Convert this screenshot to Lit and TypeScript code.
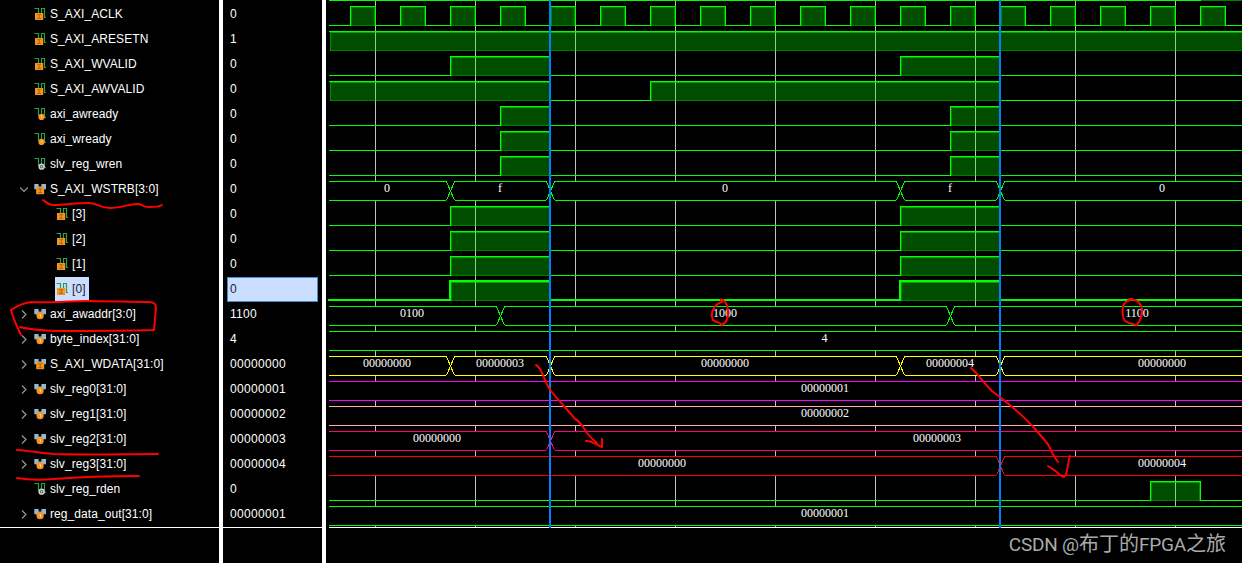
import { LitElement, html, svg, css } from "lit";
import { customElement } from "lit/decorators.js";
import { classMap } from "lit/directives/class-map.js";

type Icon = "port" | "reg" | "wire" | "busPort" | "busReg";
interface Signal {
  name: string;
  value: string;
  icon: Icon;
  toggle?: "open" | "closed";
  child?: boolean;
  selected?: boolean;
  high?: [number, number][];
  color?: string;
  cuts?: number[];
  labels?: [number, string][];
}

const LEFT = 329;
const RIGHT = 1242;
const GREEN = "#00ff00";
const clock: [number, number][] = Array.from({ length: 18 }, (_, i) => [350 + i * 50, 375 + i * 50]);
const strobe: [number, number][] = [[450, 550], [900, 1000]];
const ready: [number, number][] = [[500, 550], [950, 1000]];

const SIGNALS: Signal[] = [
  { name: "S_AXI_ACLK", value: "0", icon: "port", high: clock },
  { name: "S_AXI_ARESETN", value: "1", icon: "port", high: [[LEFT, RIGHT + 2]] },
  { name: "S_AXI_WVALID", value: "0", icon: "port", high: strobe },
  { name: "S_AXI_AWVALID", value: "0", icon: "port", high: [[LEFT, 550], [650, 1000]] },
  { name: "axi_awready", value: "0", icon: "reg", high: ready },
  { name: "axi_wready", value: "0", icon: "reg", high: ready },
  { name: "slv_reg_wren", value: "0", icon: "wire", high: ready },
  { name: "S_AXI_WSTRB[3:0]", value: "0", icon: "busPort", toggle: "open", color: GREEN, cuts: [450, 550, 900, 1000], labels: [[387, "0"], [500, "f"], [725, "0"], [950, "f"], [1162, "0"]] },
  { name: "[3]", value: "0", icon: "port", child: true, high: strobe },
  { name: "[2]", value: "0", icon: "port", child: true, high: strobe },
  { name: "[1]", value: "0", icon: "port", child: true, high: strobe },
  { name: "[0]", value: "0", icon: "port", child: true, selected: true, high: strobe },
  { name: "axi_awaddr[3:0]", value: "1100", icon: "busReg", toggle: "closed", color: GREEN, cuts: [500, 950], labels: [[412, "0100"], [725, "1000"], [1137, "1100"]] },
  { name: "byte_index[31:0]", value: "4", icon: "busReg", toggle: "closed", color: GREEN, labels: [[824.5, "4"]] },
  { name: "S_AXI_WDATA[31:0]", value: "00000000", icon: "busPort", toggle: "closed", color: "#ffff00", cuts: [450, 550, 900, 1000], labels: [[387, "00000000"], [500, "00000003"], [725, "00000000"], [950, "00000004"], [1162, "00000000"]] },
  { name: "slv_reg0[31:0]", value: "00000001", icon: "busReg", toggle: "closed", color: "#ff00ff", labels: [[825, "00000001"]] },
  { name: "slv_reg1[31:0]", value: "00000002", icon: "busReg", toggle: "closed", color: "#ffafaf", labels: [[825, "00000002"]] },
  { name: "slv_reg2[31:0]", value: "00000003", icon: "busReg", toggle: "closed", color: "#ff007f", cuts: [550], labels: [[437, "00000000"], [937, "00000003"]] },
  { name: "slv_reg3[31:0]", value: "00000004", icon: "busReg", toggle: "closed", color: "#ff0000", cuts: [1000], labels: [[662, "00000000"], [1162, "00000004"]] },
  { name: "slv_reg_rden", value: "0", icon: "wire", high: [[1150, 1200]] },
  { name: "reg_data_out[31:0]", value: "00000001", icon: "busReg", toggle: "closed", color: GREEN, labels: [[825, "00000001"]] },
];

const trace = svg`<path d="M.5 .5H4.5V8M7.5 10V.5H10.5V9.5H12" fill="none" stroke="#2f9e49" stroke-width="1.2"/>`;
const blocks = svg`<path d="M.3 1H4.6V3.4H7.4V1H12V6.2H9.5L8 8.5H3.5L2.5 6.2H.3Z" fill="#93b9cf"/>`;
const glyphs: Record<Icon, unknown> = {
  port: svg`${trace}<rect x="1" y="5" width="8.2" height="7" fill="#f7941e"/><path d="M3.2 6.7H7.2M5.2 6.7V10.4M3.2 10.4H7.2" stroke="#a0641c" stroke-width=".9" fill="none"/>`,
  reg: svg`${trace}<circle cx="7.5" cy="8.9" r="3.1" fill="#f7941e"/><path d="M6.8 7.8h1v2.4" stroke="#ffd9a0" fill="none" stroke-width=".8"/>`,
  wire: svg`${trace}<circle cx="7.6" cy="8.7" r="2.4" fill="#555" stroke="#d0d0d0" stroke-width="1.5"/><circle cx="7.6" cy="8.7" r=".8" fill="#eee"/>`,
  busPort: svg`${blocks}<rect x="2.2" y="4" width="8" height="7.2" fill="#f7941e"/><path d="M4.2 5.9H8.2M6.2 5.9V9.6M4.2 9.6H8.2" stroke="#a0641c" stroke-width=".9" fill="none"/>`,
  busReg: svg`${blocks}<circle cx="6.1" cy="7.7" r="3.6" fill="#f7941e"/><path d="M5.4 6.3h1.1v2.8" stroke="#ffe2b8" fill="none" stroke-width=".9"/>`,
};

@customElement("signal-icon")
class SignalIcon extends LitElement {
  static properties = { kind: {} };
  declare kind: Icon;
  static styles = css`
    :host { display: block; width: 13px; height: 13px; }
    svg { display: block; }
  `;
  render() {
    return html`<svg width="13" height="13" viewBox="0 0 13 13">${glyphs[this.kind]}</svg>`;
  }
}

@customElement("wave-view")
class WaveView extends LitElement {
  static styles = css`
    :host { display: block; }
    svg { display: block; }
    .label { font: 12px "Liberation Serif", serif; fill: #fff; text-anchor: middle; }
    .crisp { shape-rendering: crispEdges; }
  `;

  private bar(x: number, y: number, w: number, h: number, fill: string) {
    return svg`<rect x=${x} y=${y} width=${w} height=${h} fill=${fill}/>`;
  }

  private bit(s: Signal, i: number) {
    const top = 6 + 25 * i;
    const low = top + 19;
    const t = s.selected ? 2 : 1;
    const out: unknown[] = [];
    let at = s.selected ? LEFT - 1 : LEFT;
    for (const [a, b] of s.high!) {
      const fromEdge = a === LEFT;
      if (!fromEdge) {
        out.push(this.bar(at, low - t + 1, a - at, t, GREEN));
      }
      out.push(this.bar(a + 1, top + 1, b - a - 1, 19, "rgba(0,255,0,.3)"));
      out.push(this.bar(a + 1, low, b - a - 1, 1, "rgba(0,255,0,.28)"));
      out.push(this.bar(a + 1, top + 1, b - a - 1, 1, i === 0 ? "rgba(0,255,0,.3)" : "rgba(0,255,0,.5)"));
      out.push(this.bar(a + 1, top + 2, 1, 18, "rgba(0,255,0,.35)"));
      out.push(this.bar(a - t + 1, top - t + 1, b - a + t, t, GREEN));
      if (!fromEdge) out.push(this.bar(a - t + 1, top - t + 1, t, 19 + t, GREEN));
      out.push(this.bar(b - 1, top + 2, 1, 18, "rgba(0,255,0,.35)"));
      out.push(this.bar(b, top, 1, 20, GREEN));
      at = b;
    }
    if (at < RIGHT) out.push(this.bar(at, low - t + 1, RIGHT - at, t, GREEN));
    return out;
  }

  private bus(s: Signal, i: number) {
    const top = 6 + 25 * i;
    const cuts = s.cuts ?? [];
    const edges = [LEFT - 5, ...cuts, RIGHT + 5];
    const rails = edges.slice(1).map((b, k) => {
      const a = edges[k] + 5;
      return [this.bar(a, top, b - 4 - a, 1, s.color!), this.bar(a, top + 19, b - 4 - a, 1, s.color!)];
    });
    const crosses = cuts.map(
      (c) => svg`<path d="M${c - 3.5} ${top + 0.5}L${c + 4.5} ${top + 19.5}M${c + 4.5} ${top + 0.5}L${c - 3.5} ${top + 19.5}" stroke=${s.color!} fill="none"/>`
    );
    return svg`${this.bar(LEFT, top, RIGHT - LEFT, 20, "#000")}${rails}${crosses}`;
  }

  render() {
    return html`<svg width="916" height="563" viewBox="326 0 916 563">
      <g class="crisp">
        ${Array.from({ length: 9 }, (_, i) => this.bar(375 + i * 100, 0, 1, 527, "#c0c0c0"))}
        ${this.bar(LEFT, 0, 872, 1, GREEN)}${this.bar(1201, 0, 41, 1, "#008000")}
        ${SIGNALS.map((s, i) => (s.high ? this.bit(s, i) : this.bus(s, i)))}
        ${this.bar(LEFT, 527, 913, 1, "#fff")}
        ${this.bar(549, 0, 2, 528, "#0080ff")}${this.bar(999, 0, 2, 528, "#0080ff")}
      </g>
      ${SIGNALS.map((s, i) => (s.labels ?? []).map(([x, t]) => svg`<text class="label" x=${x} y=${17 + 25 * i}>${t}</text>`))}
    </svg>`;
  }
}

@customElement("app-root")
class AppRoot extends LitElement {
  static styles = css`
    :host {
      display: block; position: relative; width: 1242px; height: 563px; overflow: hidden;
      background: #000; color: #fff; font: 12px "Liberation Sans", Arial, sans-serif;
    }
    .columns { display: grid; grid-template-columns: 219px 99px 916px; column-gap: 4px; height: 563px; background: #fff; }
    .pane { background: #000; min-width: 0; }
    .list { display: grid; grid-auto-rows: 25px; padding-top: 2px; border-bottom: 1px solid #fff; }
    .row { display: flex; align-items: center; padding-left: 20px; }
    .child { padding-left: 42px; }
    .toggle { width: 8px; height: 25px; flex: none; margin-right: 5px; }
    .tag { display: flex; align-items: center; height: 25px; padding: 0 3px 0 1px; }
    .tag signal-icon { margin-right: 3px; }
    .tag.on { background: #ccdeff; color: #223; }
    .name { height: 25px; line-height: 24px; white-space: nowrap; letter-spacing: 0.08px; }
    .value { box-sizing: border-box; margin: 0 4px; padding-left: 3px; line-height: 24px; letter-spacing: 0.33px; }
    .value.on { background: #ccdeff; color: #223; border: 1px solid #3c8fd0; padding-left: 2px; line-height: 22px; }
    .ink { position: absolute; left: 0; top: 0; }
    .mark { position: absolute; right: 16px; top: 529px; font: 20px/27px "Noto Sans CJK SC", sans-serif; color: #aaa; white-space: nowrap; }
    .latin { font-family: Roboto, sans-serif; font-size: 19px; letter-spacing: -0.2px; }
  `;

  render() {
    return html`
      <div class="columns">
        <div class="pane">
          <div class="list">
            ${SIGNALS.map(
              (s) => html`<div class=${classMap({ row: true, child: !!s.child })}>
                <svg class="toggle" viewBox="0 0 8 25">
                  ${s.toggle
                    ? svg`<path d=${s.toggle === "open" ? "M0 10.5L4 14.5L8 10.5" : "M2 8.5L6 12.5L2 16.5"} fill="none" stroke="#999" stroke-width="1.2"/>`
                    : ""}
                </svg>
                <div class=${classMap({ tag: true, on: !!s.selected })}>
                  <signal-icon .kind=${s.icon}></signal-icon><span class="name">${s.name}</span>
                </div>
              </div>`
            )}
          </div>
        </div>
        <div class="pane">
          <div class="list">
            ${SIGNALS.map((s) => html`<div class=${classMap({ value: true, on: !!s.selected })}>${s.value}</div>`)}
          </div>
        </div>
        <wave-view class="pane"></wave-view>
      </div>
      <svg class="ink" width="1242" height="563" fill="none" stroke="#f00" stroke-width="2" stroke-linecap="round" stroke-linejoin="round">
        <path d="M43 200C46 202 49 205 53 205C64 205 76 203 88 203C98 203 99 208 110 208C122 208 128 204 138 204C143 204 141 207 149 207C155 207 159 207 162 205"/>
        <path d="M21 335C16 325 13 317 11 310C17 306 23 303 31 302C50 303 66 301 85 301C108 301 130 302 149 302C154 302 156 304 156 308L154 330C120 331 80 331 55 331C40 330 30 330 20 327"/>
        <path d="M17 450C31 451 40 453 53 454C90 455 122 454 158 454"/>
        <path d="M17 478C28 480 42 480 54 479C78 477 98 476 139 476"/>
        <path d="M536 365C540 367 541 371 543 375C546 382 548 388 551 391C559 401 567 409 575 419C580 421 583 427 587 433C591 438 593 440 597 443M586 441C592 440 597 446 602 447V439"/>
        <path d="M971 368C980 376 984 383 992 391C1008 403 1023 415 1036 430C1041 436 1048 443 1050 448C1052 454 1055 458 1058 462M1048 466C1054 470 1057 471 1060 475L1064 477C1068 474 1067 465 1070 456"/>
        <path d="M722 302C717 303 716 305 714 308C711 313 711 316 713 320C716 323 718 321 722 325C726 323 728 320 728 314C728 308 727 303 724 301C722 299 721 299 721 300"/>
        <path d="M1132 299C1127 301 1124 302 1123 307C1122 313 1123 318 1125 321C1131 325 1134 324 1137 325C1140 321 1142 315 1142 310C1141 304 1139 301 1135 300L1129 299"/>
      </svg>
      <div class="mark"><span class="latin">CSDN @</span>布丁的<span class="latin">FPGA</span>之旅</div>
    `;
  }
}
